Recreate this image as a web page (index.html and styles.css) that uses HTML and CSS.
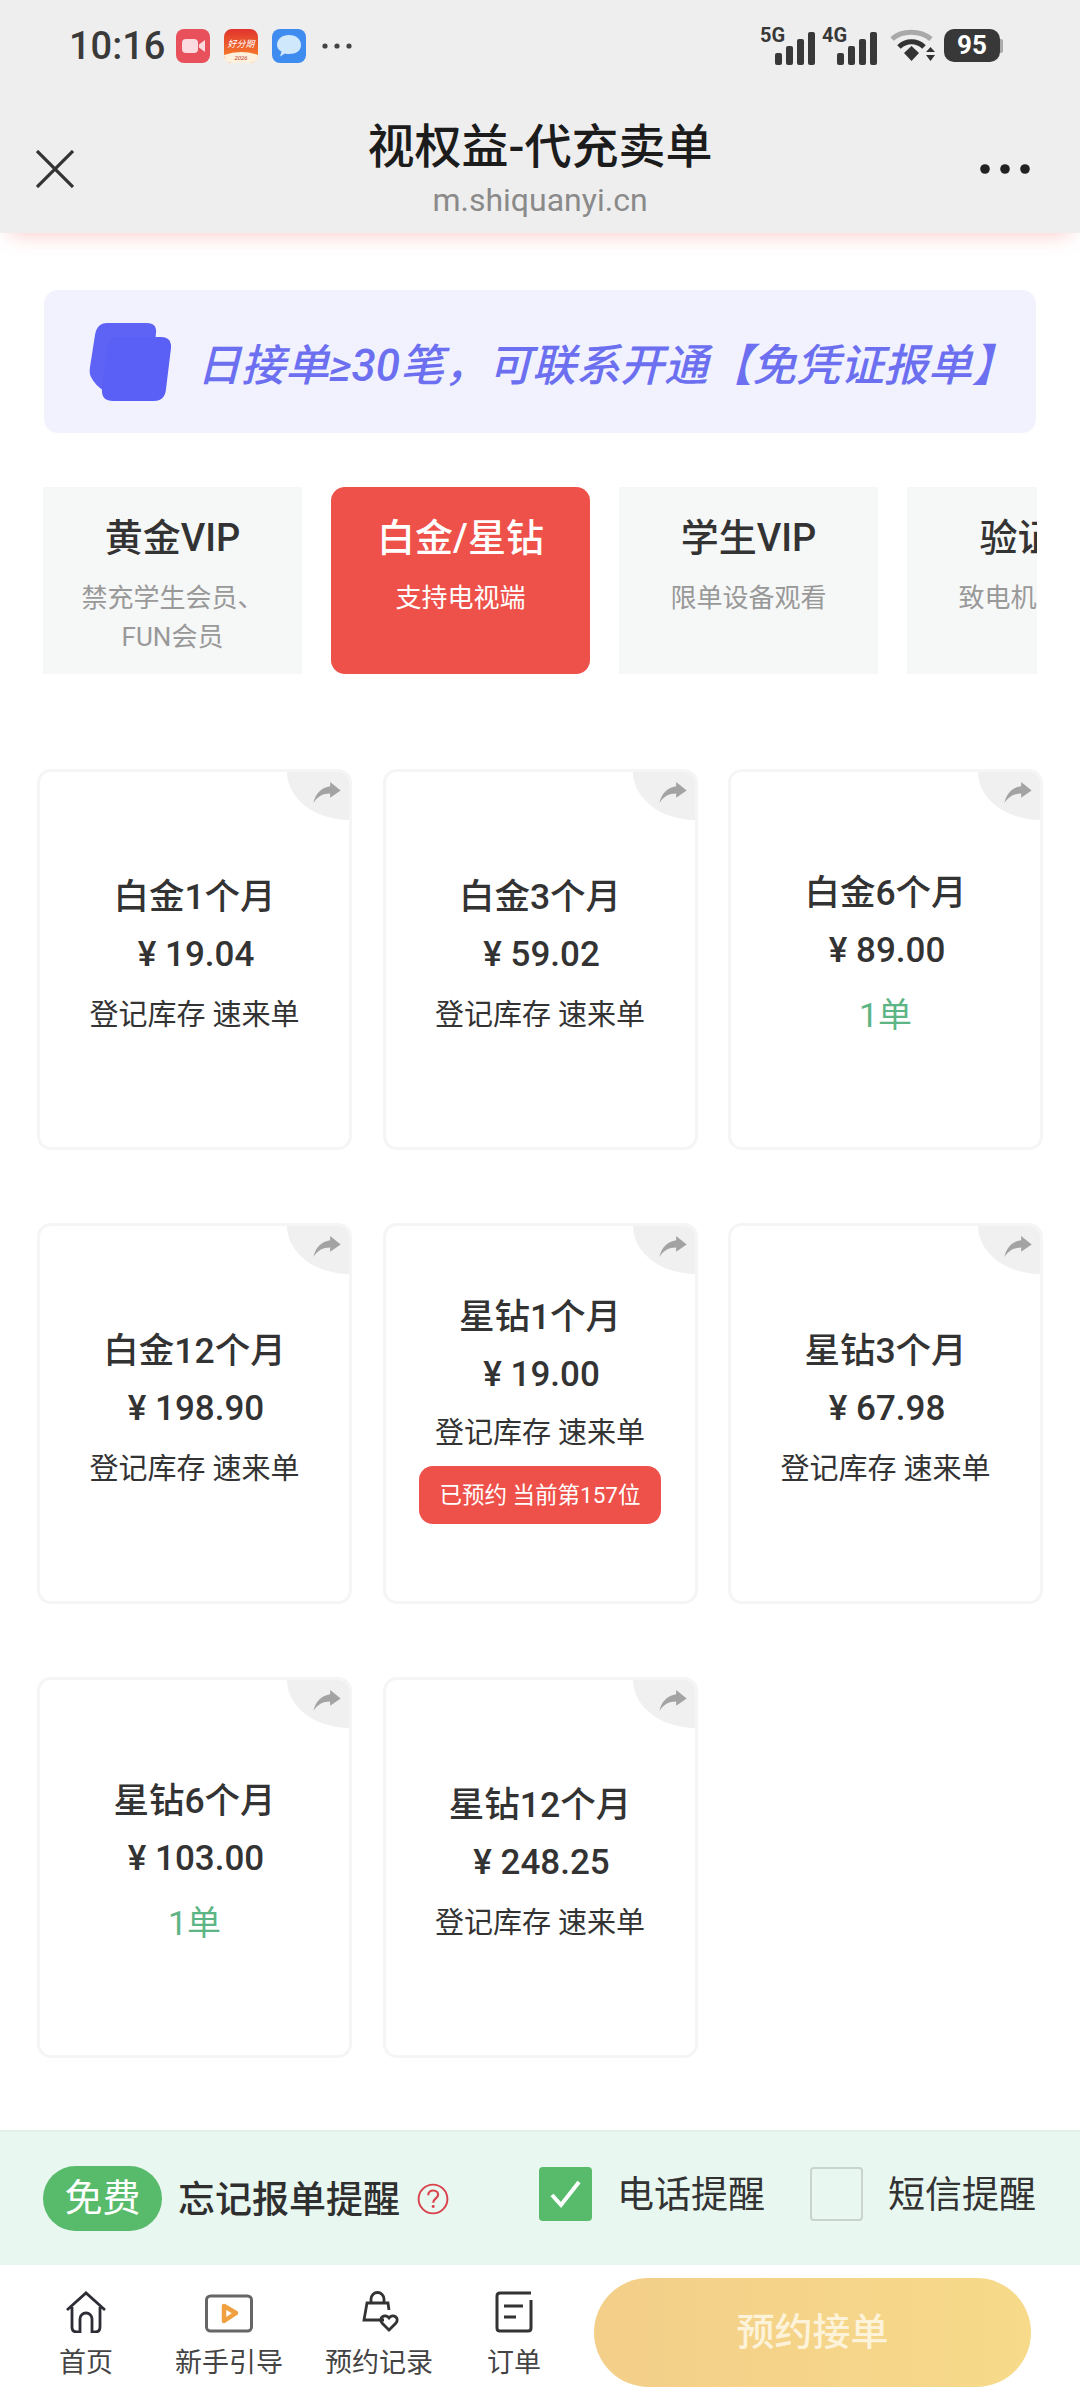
FILE: index.html
```html
<!DOCTYPE html>
<html lang="zh-CN">
<head>
    <meta charset="UTF-8">
    <meta name="viewport" content="width=device-width, initial-scale=1.0">
    <title>视权益-代充卖单</title>
    <link rel="stylesheet" href="styles.css">
</head>
<body>
<div class="page">
    <!-- Grey browser header -->
    <header class="header">
        <div class="status-bar">
            <div class="status-left">
                <span class="time">10:16</span>
                <svg class="app-icon" viewBox="0 0 34 34">
                    <rect width="34" height="34" rx="8" fill="#e8505b"/>
                    <rect x="6" y="10" width="16" height="14" rx="4" fill="#fbdbe0"/>
                    <path d="M23 15.5 L29 11 V23 L23 18.5 Z" fill="#fbdbe0"/>
                </svg>
                <svg class="app-icon" viewBox="0 0 34 34">
                    <defs>
                        <linearGradient id="orangeApp" x1="0" y1="0" x2="0" y2="1">
                            <stop offset="0" stop-color="#e0332e"/>
                            <stop offset="0.7" stop-color="#f3722c"/>
                        </linearGradient>
                    </defs>
                    <rect width="34" height="34" rx="8" fill="url(#orangeApp)"/>
                    <path d="M0 26 Q17 20 34 26 V26 Q34 34 26 34 H8 Q0 34 0 26 Z" fill="#fdf0dc"/>
                    <text x="17" y="18" class="app-text" text-anchor="middle">好分期</text>
                    <text x="17" y="31" class="app-text-small" text-anchor="middle">2026</text>
                </svg>
                <svg class="app-icon" viewBox="0 0 34 34">
                    <rect width="34" height="34" rx="8" fill="#3f8cf0"/>
                    <path d="M17 6 C24 6 29 10 29 16 C29 22 24 25 17 25 C15.500 25 14 25 13 24.500 L8 27.500 L9.500 22.500 C6.500 21 5 18.500 5 16 C5 10 10 6 17 6 Z" fill="#cfe8fb"/>
                </svg>
                <svg class="more-small" viewBox="0 0 30 6">
                    <circle cx="3" cy="3" r="2.600"/><circle cx="15" cy="3" r="2.600"/><circle cx="27" cy="3" r="2.600"/>
                </svg>
            </div>
            <div class="status-right">
                <svg class="signal" viewBox="0 -8 56 44">
                    <text x="0" y="13" class="net-text">5G</text>
                    <rect x="15" y="24" width="7" height="12" rx="2"/>
                    <rect x="26" y="17" width="7" height="19" rx="2"/>
                    <rect x="37" y="10" width="7" height="26" rx="2"/>
                    <rect x="48" y="3" width="7" height="33" rx="2"/>
                </svg>
                <svg class="signal" viewBox="0 -8 56 44">
                    <text x="0" y="13" class="net-text">4G</text>
                    <rect x="15" y="24" width="7" height="12" rx="2"/>
                    <rect x="26" y="17" width="7" height="19" rx="2"/>
                    <rect x="37" y="10" width="7" height="26" rx="2"/>
                    <rect x="48" y="3" width="7" height="33" rx="2"/>
                </svg>
                <svg class="wifi" viewBox="0 0 46 34">
                    <path d="M2 10 C12 1 30 1 41 10" fill="none" stroke="#a9a9a9" stroke-width="5"/>
                    <path d="M9 18 C16 11 27 11 34 18" fill="none" stroke="#333" stroke-width="5"/>
                    <path d="M14 24 L21.500 17 L29 24 L21.500 32 Z" fill="#333"/>
                    <path d="M36 23 L40.500 18 L45 23 Z M36 26 L45 26 L40.500 32 Z" fill="#333"/>
                </svg>
                <div class="battery"><span class="battery-level">95</span><span class="battery-cap"></span></div>
            </div>
        </div>
        <div class="topbar">
            <svg class="close-icon" viewBox="0 0 38 38">
                <path d="M1 1 L37 37 M37 1 L1 37" stroke="#333" stroke-width="3.200" fill="none"/>
            </svg>
            <div class="title-block">
                <div class="title">视权益-代充卖单</div>
                <div class="url">m.shiquanyi.cn</div>
            </div>
            <svg class="more-icon" viewBox="0 0 50 10">
                <circle cx="5" cy="5" r="4.800"/><circle cx="25" cy="5" r="4.800"/><circle cx="45" cy="5" r="4.800"/>
            </svg>
        </div>
    </header>

    <main class="content">
        <div class="banner">
            <svg class="banner-icon" viewBox="0 0 82 78">
                <path d="M18 0 H58 Q68 0 67 10 L66 20 H30 Q20 20 19 30 L15 68 Q6 62 2 54 Q0 50 1 44 L6 12 Q8 0 18 0 Z" fill="#5f63f5"/>
                <path d="M30 14 H72 Q83 14 82 25 L77 66 Q76 78 65 78 H24 Q12 78 13 66 L18 26 Q19 14 30 14 Z" fill="#5a5ff5"/>
            </svg>
            <span class="banner-text">日接单≥30笔，可联系开通【免凭证报单】</span>
        </div>

        <div class="tabs">
            <div class="tab">
                <div class="tab-name">黄金VIP</div>
                <div class="tab-desc">禁充学生会员、<br>FUN会员</div>
            </div>
            <div class="tab active">
                <div class="tab-name">白金/星钻</div>
                <div class="tab-desc">支持电视端</div>
            </div>
            <div class="tab">
                <div class="tab-name">学生VIP</div>
                <div class="tab-desc">限单设备观看</div>
            </div>
            <div class="tab">
                <div class="tab-name">验证码</div>
                <div class="tab-desc">致电机主下单</div>
            </div>
        </div>

        <div class="cards">
            <div class="card">
                <div class="share"><svg viewBox="0 0 26 20"><path d="M16 0 L26 8 L16 15 V11 C9 11 4 14 0 20 C2 11 8 5 16 4 Z"/></svg></div>
                <div class="card-name">白金1个月</div>
                <div class="card-price">¥ 19.04</div>
                <div class="card-note">登记库存 速来单</div>
            </div>
            <div class="card">
                <div class="share"><svg viewBox="0 0 26 20"><path d="M16 0 L26 8 L16 15 V11 C9 11 4 14 0 20 C2 11 8 5 16 4 Z"/></svg></div>
                <div class="card-name">白金3个月</div>
                <div class="card-price">¥ 59.02</div>
                <div class="card-note">登记库存 速来单</div>
            </div>
            <div class="card">
                <div class="share"><svg viewBox="0 0 26 20"><path d="M16 0 L26 8 L16 15 V11 C9 11 4 14 0 20 C2 11 8 5 16 4 Z"/></svg></div>
                <div class="card-name">白金6个月</div>
                <div class="card-price">¥ 89.00</div>
                <div class="card-count">1单</div>
            </div>
            <div class="card">
                <div class="share"><svg viewBox="0 0 26 20"><path d="M16 0 L26 8 L16 15 V11 C9 11 4 14 0 20 C2 11 8 5 16 4 Z"/></svg></div>
                <div class="card-name">白金12个月</div>
                <div class="card-price">¥ 198.90</div>
                <div class="card-note">登记库存 速来单</div>
            </div>
            <div class="card">
                <div class="share"><svg viewBox="0 0 26 20"><path d="M16 0 L26 8 L16 15 V11 C9 11 4 14 0 20 C2 11 8 5 16 4 Z"/></svg></div>
                <div class="card-name">星钻1个月</div>
                <div class="card-price">¥ 19.00</div>
                <div class="card-note tight">登记库存 速来单</div>
                <div class="card-queue">已预约 当前第157位</div>
            </div>
            <div class="card">
                <div class="share"><svg viewBox="0 0 26 20"><path d="M16 0 L26 8 L16 15 V11 C9 11 4 14 0 20 C2 11 8 5 16 4 Z"/></svg></div>
                <div class="card-name">星钻3个月</div>
                <div class="card-price">¥ 67.98</div>
                <div class="card-note">登记库存 速来单</div>
            </div>
            <div class="card">
                <div class="share"><svg viewBox="0 0 26 20"><path d="M16 0 L26 8 L16 15 V11 C9 11 4 14 0 20 C2 11 8 5 16 4 Z"/></svg></div>
                <div class="card-name">星钻6个月</div>
                <div class="card-price">¥ 103.00</div>
                <div class="card-count">1单</div>
            </div>
            <div class="card">
                <div class="share"><svg viewBox="0 0 26 20"><path d="M16 0 L26 8 L16 15 V11 C9 11 4 14 0 20 C2 11 8 5 16 4 Z"/></svg></div>
                <div class="card-name">星钻12个月</div>
                <div class="card-price">¥ 248.25</div>
                <div class="card-note">登记库存 速来单</div>
            </div>
        </div>
    </main>

    <!-- Reminder strip and bottom nav -->
    <footer class="footer">
        <div class="reminder">
            <span class="free-pill">免费</span>
            <span class="reminder-title">忘记报单提醒</span>
            <svg class="help-icon" viewBox="0 0 30 30">
                <circle cx="15" cy="15" r="13.500" fill="none" stroke="#d9414b" stroke-width="1.800"/>
                <path d="M10.500 11.500 C10.500 8.500 13 7 15.200 7 C18 7 19.800 8.800 19.800 11 C19.800 14.500 15.200 14.500 15.200 18.500" fill="none" stroke="#d9414b" stroke-width="2"/>
                <circle cx="15.200" cy="22" r="1.400" fill="#d9414b"/>
            </svg>
            <div class="options">
                <span class="checkbox checked">
                    <svg viewBox="0 0 34 30"><path d="M3 16 L12 26 L30 3" fill="none" stroke="#fff" stroke-width="4"/></svg>
                </span>
                <span class="option-label">电话提醒</span>
                <span class="checkbox"></span>
                <span class="option-label">短信提醒</span>
            </div>
        </div>
        <nav class="nav">
            <div class="nav-items">
                <div class="nav-item">
                    <svg class="nav-icon" viewBox="0 0 42 42">
                        <path d="M2 19 L21 2 L40 19 M7 16 V36 Q7 41 12 41 H15 V28 A6 6 0 0 1 27 28 V41 H30 Q35 41 35 36 V16" fill="none" stroke="#2d2d35" stroke-width="2.800"/>
                    </svg>
                    <span class="nav-label">首页</span>
                </div>
                <div class="nav-item">
                    <svg class="nav-icon" viewBox="0 0 48 42">
                        <rect x="1.500" y="5" width="45" height="35" rx="4" fill="none" stroke="#666" stroke-width="3"/>
                        <path d="M19 15 L31 22 L19 30 Z" fill="none" stroke="#f0a040" stroke-width="4.500" stroke-linejoin="round"/>
                    </svg>
                    <span class="nav-label">新手引导</span>
                </div>
                <div class="nav-item">
                    <svg class="nav-icon" viewBox="0 0 42 42">
                        <path d="M26 29 H6 L9 12 H30 L31 19 M13 12 V8 A6.500 6.500 0 0 1 26 8 V12" fill="none" stroke="#333" stroke-width="2.800"/>
                        <path d="M31 39 L24 32 C20 27 27 22 31 27 C35 22 42 27 38 32 Z" fill="none" stroke="#333" stroke-width="2.800"/>
                    </svg>
                    <span class="nav-label">预约记录</span>
                </div>
                <div class="nav-item">
                    <svg class="nav-icon" viewBox="0 0 38 42">
                        <path d="M36 2 H5 Q2 2 2 5 V37 Q2 40 5 40 H33 Q36 40 36 37 V9" fill="none" stroke="#333" stroke-width="3"/>
                        <path d="M9 15 H28 M9 26 H21" fill="none" stroke="#333" stroke-width="3"/>
                    </svg>
                    <span class="nav-label">订单</span>
                </div>
            </div>
            <div class="reserve-btn">预约接单</div>
        </nav>
    </footer>
</div>
</body>
</html>
```

FILE: styles.css
```css
* {
    box-sizing: border-box;
}
body {
    margin: 0;
    font-family: Roboto, "Noto Sans CJK SC", sans-serif;
    color: #333;
    background: #fff;
}
.page {
    width: 1080px;
    height: 2400px;
    display: flex;
    flex-direction: column;
    overflow: hidden;
}

/* header */
.header {
    height: 233px;
    background: #eeeeee;
    box-shadow: 0 10px 20px -10px rgba(238, 81, 74, 0.35);
    position: relative;
    flex-shrink: 0;
}
.status-bar {
    height: 92px;
    padding: 29px 77px 0 69px;
    display: flex;
    justify-content: space-between;
    align-items: flex-start;
}
.status-left {
    display: flex;
    align-items: center;
    height: 34px;
}
.time {
    width: 107px;
    font-size: 38px;
    font-weight: 500;
    color: #3a3a3a;
}
.app-icon {
    width: 34px;
    height: 34px;
    margin-right: 14px;
}
.app-text {
    font-size: 9px;
    font-style: italic;
    fill: #fff;
}
.app-text-small {
    font-size: 6px;
    font-style: italic;
    fill: #c2342a;
}
.more-small {
    width: 30px;
    height: 6px;
    margin-left: 2px;
    fill: #444;
}
.status-right {
    display: flex;
    align-items: flex-start;
}
.signal {
    width: 56px;
    height: 44px;
    margin: -8px 6px 0 0;
    fill: #383838;
}
.net-text {
    font-size: 20px;
    font-weight: 700;
}
.wifi {
    width: 46px;
    height: 34px;
    margin: 0 8px 0 6px;
}
.battery {
    display: flex;
    align-items: center;
}
.battery-level {
    width: 56px;
    height: 33px;
    border-radius: 10px;
    background: #383838;
    color: #fff;
    font-size: 26px;
    font-weight: 700;
    line-height: 33px;
    text-align: center;
}
.battery-cap {
    width: 3px;
    height: 14px;
    background: #aaa;
    border-radius: 0 2px 2px 0;
}
.topbar {
    display: grid;
    grid-template-columns: 1fr auto 1fr;
    align-items: center;
    padding: 0 50px;
}
.close-icon {
    width: 38px;
    height: 38px;
    margin: 26px 0 0 -14px;
}
.title-block {
    text-align: center;
    margin-top: 22px;
}
.title {
    font-size: 47px;
    line-height: 66px;
    font-weight: 500;
    color: #1c1c1c;
}
.url {
    font-size: 32px;
    line-height: 40px;
    color: #8a8a8a;
}
.more-icon {
    width: 50px;
    height: 10px;
    justify-self: end;
    margin-top: 26px;
    fill: #222;
}

/* main area */
.content {
    flex: 1;
    padding: 57px 36px 0 37px;
}
.banner {
    height: 143px;
    margin: 0 0 54px 7px;
    width: 992px;
    background: #f1f2fe;
    border-radius: 14px;
    display: flex;
    align-items: center;
    padding-left: 45px;
}
.banner-icon {
    width: 82px;
    height: 78px;
    margin-right: 26px;
}
.banner-text {
    font-size: 44px;
    font-weight: 500;
    font-style: italic;
    color: #6b6ff0;
    white-space: nowrap;
}
.tabs {
    display: flex;
    gap: 29px;
    width: 994px;
    margin: 0 0 95px 6px;
    overflow: hidden;
}
.tab {
    width: 259px;
    height: 187px;
    flex-shrink: 0;
    background: #f6f7f7;
    text-align: center;
    padding-top: 25px;
}
.tab.active {
    background: #ee514a;
    border-radius: 14px;
    color: #fff;
}
.tab-name {
    font-size: 38px;
    line-height: 52px;
    font-weight: 500;
}
.tab-desc {
    font-size: 26px;
    line-height: 39px;
    margin-top: 15px;
    color: #999;
}
.tab.active .tab-desc {
    color: #fff;
}
.cards {
    display: grid;
    grid-template-columns: repeat(3, 315px);
    grid-auto-rows: 381px;
    column-gap: 30.500px;
    row-gap: 73px;
}
.card {
    position: relative;
    border: 3px solid #f5f5f5;
    border-radius: 14px;
    display: flex;
    flex-direction: column;
    align-items: center;
    justify-content: center;
    padding-bottom: 8px;
    overflow: hidden;
}
.share {
    position: absolute;
    top: 0;
    right: 0;
    width: 62px;
    height: 48px;
    background: #f0f0f0;
    border-radius: 0 0 0 100%;
}
.share svg {
    position: absolute;
    top: 10px;
    right: 8px;
    width: 28px;
    height: 21px;
    fill: #a3a3a3;
}
.card-name {
    font-size: 35.500px;
    line-height: 58px;
    font-weight: 500;
}
.card-price {
    font-size: 35px;
    line-height: 58px;
    font-weight: 500;
    padding-left: 3px;
}
.card-note {
    font-size: 29px;
    line-height: 58px;
    margin-top: 2px;
}
.card-note.tight {
    margin-top: 0;
}
.card-count {
    font-size: 34px;
    line-height: 66px;
    margin-top: 2px;
    color: #5db585;
}
.card-queue {
    width: 242px;
    height: 58px;
    margin: 4px 0 8px;
    background: #ee514a;
    border-radius: 14px;
    color: #fff;
    font-size: 22.500px;
    line-height: 58px;
    text-align: center;
}

/* reminder + nav */
.footer {
    flex-shrink: 0;
}
.reminder {
    height: 135px;
    background: #e8f7f0;
    border-top: 2px solid #e2f1ea;
    display: flex;
    align-items: center;
    padding-left: 43px;
    white-space: nowrap;
}
.free-pill {
    width: 119px;
    height: 65px;
    flex-shrink: 0;
    border-radius: 33px;
    background: #58bb6b;
    color: #fff;
    font-size: 38px;
    line-height: 65px;
    text-align: center;
}
.reminder-title {
    margin: 0 0 4px 16px;
    font-size: 37px;
    font-weight: 500;
    color: #2f2f2f;
    flex-shrink: 0;
}
.help-icon {
    width: 32px;
    height: 32px;
    margin-left: 17px;
    flex-shrink: 0;
}
.options {
    display: flex;
    align-items: center;
    flex-shrink: 0;
    margin: 0 0 10px 90px;
}
.checkbox {
    width: 53px;
    height: 54px;
    flex-shrink: 0;
    border-radius: 4px;
    border: 2px solid #c9d3cf;
    display: flex;
    align-items: center;
    justify-content: center;
}
.checkbox.checked {
    background: #58bb6b;
    border-color: #58bb6b;
}
.checkbox svg {
    width: 34px;
    height: 30px;
}
.option-label {
    margin: 0 45px 4px 25px;
    font-size: 37px;
    color: #333;
    flex-shrink: 0;
}
.nav {
    height: 135px;
    display: flex;
    background: #fff;
}
.nav-items {
    width: 594px;
    display: grid;
    grid-template-columns: 144px 142px 158px 112px;
    padding-left: 14px;
    padding-top: 26px;
}
.nav-item {
    display: flex;
    flex-direction: column;
    align-items: center;
}
.nav-icon {
    height: 42px;
}
.nav-label {
    font-size: 27px;
    line-height: 36px;
    margin-top: 12px;
    color: #444;
}
.reserve-btn {
    width: 437px;
    height: 109px;
    margin-top: 13px;
    border-radius: 55px;
    background: linear-gradient(90deg, #f3cf89, #f7da8a);
    color: #fdf3da;
    font-size: 38px;
    font-weight: 500;
    line-height: 109px;
    text-align: center;
}
```
